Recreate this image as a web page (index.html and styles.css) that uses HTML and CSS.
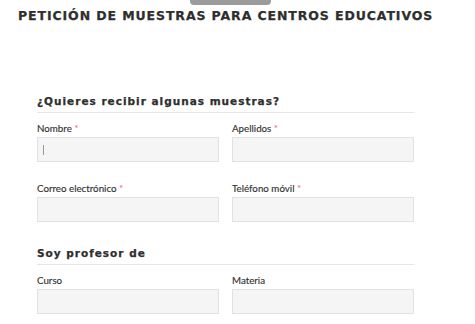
FILE: index.html
```html
<!DOCTYPE html>
<html lang="es">
<head>
  <meta charset="UTF-8" />
  <meta name="viewport" content="width=device-width, initial-scale=1.0"/>
  <title>Petición de muestras</title>
  <link rel="stylesheet" href="styles.css">
</head>
<body>
  <div class="tab"></div>
  <h1 class="title">PETICIÓN DE MUESTRAS PARA CENTROS EDUCATIVOS</h1>

  <form class="form">
    <h2 class="section">¿Quieres recibir algunas muestras?</h2>
    <div class="grid">
      <div class="field">
        <label for="nombre">Nombre <span class="req">*</span></label>
        <div class="control">
          <input type="text" id="nombre" name="nombre" />
          <span class="caret"></span>
        </div>
      </div>
      <div class="field">
        <label for="apellidos">Apellidos <span class="req">*</span></label>
        <input type="text" id="apellidos" name="apellidos" />
      </div>
      <div class="field">
        <label for="correo">Correo electrónico <span class="req">*</span></label>
        <input type="email" id="correo" name="correo" />
      </div>
      <div class="field">
        <label for="movil">Teléfono móvil <span class="req">*</span></label>
        <input type="tel" id="movil" name="movil" />
      </div>
    </div>

    <h2 class="section second">Soy profesor de</h2>
    <div class="grid">
      <div class="field">
        <label for="curso">Curso</label>
        <input type="text" id="curso" name="curso" />
      </div>
      <div class="field">
        <label for="materia">Materia</label>
        <input type="text" id="materia" name="materia" />
      </div>
    </div>
  </form>
</body>
</html>
```
FILE: styles.css
```css
* {
  box-sizing: border-box;
}

html, body {
  margin: 0;
  padding: 0;
  background: #fff;
  overflow: hidden;
}

.tab {
  width: 81px;
  height: 5px;
  margin-left: 190px;
  background-color: #9b9b9b;
  border-radius: 0 0 4px 4px;
}

.title {
  margin: 3px 0 0 18px;
  font-family: 'DejaVu Sans', sans-serif;
  font-size: 12.5px;
  line-height: 16px;
  font-weight: bold;
  letter-spacing: 0.9px;
  color: #2e2e2e;
  -webkit-text-stroke: 0.25px #2e2e2e;
  white-space: nowrap;
}

.form {
  width: 377px;
  margin: 70px 0 0 37px;
}

.section {
  margin: 0;
  padding-bottom: 4px;
  border-bottom: 1px solid #e6e6e6;
  font-family: 'DejaVu Sans', sans-serif;
  font-size: 10.5px;
  line-height: 14px;
  font-weight: bold;
  letter-spacing: 1px;
  color: #2e2e2e;
  -webkit-text-stroke: 0.25px #2e2e2e;
}

.section.second {
  margin-top: 24px;
}

.grid {
  display: grid;
  grid-template-columns: 182px 182px;
  column-gap: 13px;
  row-gap: 20px;
  margin-top: 9px;
}

.field {
  display: flex;
  flex-direction: column;
}

label {
  font-family: 'Lato', sans-serif;
  font-size: 9.75px;
  line-height: 12px;
  color: #333;
  -webkit-text-stroke: 0.15px #333;
  margin-bottom: 3px;
}

.req {
  color: #e8607a;
  -webkit-text-stroke: 0;
}

.control {
  position: relative;
}

input {
  display: block;
  width: 100%;
  height: 25px;
  margin: 0;
  padding: 0 6px;
  border: 1px solid #e2e2e2;
  background-color: #f5f5f5;
  border-radius: 0;
  outline: none;
}

.caret {
  position: absolute;
  left: 6px;
  top: 8px;
  width: 1px;
  height: 10px;
  background-color: #999;
}
```
